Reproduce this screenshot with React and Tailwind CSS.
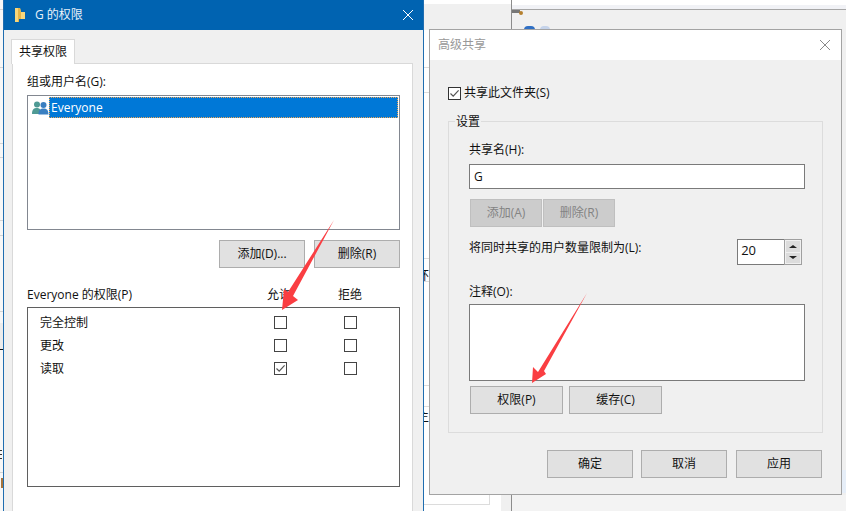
const font = "font-['Open_Sans','Noto_Sans_CJK_SC',sans-serif]"

function Button({ children, className = '', disabled = false }) {
  return (
    <div
      className={`flex h-[28px] shrink-0 items-center justify-center border ${
        disabled ? 'border-[#bfbfbf] bg-[#cccccc] text-[#838383]' : 'border-[#adadad] bg-[#e1e1e1] text-[#111]'
      } ${className}`}
    >
      {children}
    </div>
  )
}

function Check({ checked = false, dark = false }) {
  return (
    <div className={`flex h-[13px] w-[13px] items-center justify-center border ${dark ? 'border-[#333]' : 'border-[#444]'} bg-white`}>
      {checked ? (
        <svg width="11" height="11" viewBox="0 0 11 11" fill="none">
          <path d="M1.5 5.5 L4.2 8.2 L9.6 2.4" stroke="#555" strokeWidth="1.2" />
        </svg>
      ) : null}
    </div>
  )
}

function Close({ color }) {
  return (
    <svg width="12" height="12" viewBox="0 0 12 12" fill="none">
      <path d="M1 1 L11 11 M11 1 L1 11" stroke={color} strokeWidth="1" />
    </svg>
  )
}

function PermRow({ label, allowed }) {
  return (
    <div className="flex h-[23px] items-center">
      <span className="w-[246px] pl-[12px]">{label}</span>
      <Check checked={allowed} />
      <span className="w-[57px]" />
      <Check />
    </div>
  )
}

function Backdrop() {
  const leftLines = ['top-[9px]', 'top-[67px]', 'top-[143px]', 'top-[157px]', 'top-[220px]', 'top-[235px]', 'top-[311px]', 'top-[472px]']
  const midLines = ['top-[37px]', 'top-[62px]', 'top-[228px]', 'top-[251px]', 'top-[355px]', 'top-[376px]', 'top-[505px]']
  return (
    <>
      <div className="absolute left-0 top-0 h-full w-[3px] bg-[#f7f7f7]">
        {leftLines.map((t) => (
          <div key={t} className={`absolute left-0 h-px w-full bg-[#d4d4d4] ${t}`} />
        ))}
        <div className="absolute left-0 top-[323px] h-[26px] w-full bg-[#ececec]" />
        <div className="absolute left-0 top-[349px] h-px w-full bg-[#111]" />
        <div className="absolute left-0 top-[450px] h-px w-[2px] bg-[#333]" />
        <div className="absolute left-0 top-[454px] h-px w-[2px] bg-[#333]" />
        <div className="absolute left-0 top-[458px] h-px w-[2px] bg-[#333]" />
        <div className="absolute left-[1px] top-[478px] h-[10px] w-[2px] bg-[#a8743c]" />
      </div>
      <div className="absolute left-[424px] top-[30px] h-[481px] w-[5px] overflow-hidden bg-white">
        {midLines.map((t) => (
          <div key={t} className={`absolute left-0 h-px w-full bg-[#dcdcdc] ${t}`} />
        ))}
        <span className="absolute left-[-7px] top-[238px] text-[12px] leading-[16px] text-[#111]">环</span>
        <span className="absolute left-[-7px] top-[379px] text-[12px] leading-[16px] text-[#111]">主</span>
      </div>
      <div className="absolute left-[424px] top-0 h-[30px] w-[88px] border-r border-[#8c8c8c] bg-[#f0f0f0]">
        <div className="h-[4px] bg-white" />
      </div>
      <div className="absolute left-[512px] top-0 h-[30px] w-[334px] bg-[#f0f0f0]">
        <div className="h-[5px] bg-white" />
        <div className="h-[4px] bg-[#f1f2f6]" />
        <div className="h-px bg-[#a6a6a6]" />
        <div className="absolute left-0 top-[10px] h-[3px] w-[8px] bg-[#777]" />
        <div className="absolute left-[7px] top-[11px] h-[4px] w-[4px] rounded-full bg-[#b5802f]" />
        <div className="absolute left-[12px] top-[26px] h-[4px] w-[11px] rounded-t-full bg-[#2f6fc4]" />
        <div className="absolute left-[28px] top-[26px] h-[4px] w-[10px] rounded-t-full bg-[#c5d3ea]" />
      </div>
      <div className="absolute left-[424px] top-[495px] h-[10px] w-[66px] border-r border-b border-[#dcdcdc] bg-white" />
      <div className="absolute left-[490px] top-[495px] h-[16px] w-[11px] bg-white" />
      <div className="absolute left-[501px] top-[495px] h-[16px] w-[11px] border-r border-[#8c8c8c] bg-[#f0f0f0]" />
      <div className="absolute left-[512px] top-[495px] h-[16px] w-[334px] bg-[#f3f3f3]" />
      <div className="absolute left-[842px] top-[30px] h-[465px] w-[4px] bg-[#f0f0f0]">
        <div className="absolute left-0 top-[440px] h-[23px] w-full bg-[#e6eef8]" />
      </div>
    </>
  )
}

function PermissionsWindow() {
  return (
    <div className="absolute left-[3px] top-0 h-[511px] w-[421px] overflow-hidden border-x border-[#1f6db0] bg-[#f0f0f0]">
      <div className="flex h-[30px] items-center bg-[#0063b1] pl-[11px] pr-[9px] text-white">
        <svg width="11" height="14" viewBox="0 0 11 14" className="mr-[9px]">
          <path d="M0 0 H5 L6 4 H10 V11 H4 V14 H0 Z" fill="#f6d67c" />
          <path d="M3 0 H5 L6 4 V11 H4 V14 H3 Z" fill="#e3b44a" />
        </svg>
        <span className="flex-1 text-[#e8f1f9]">G 的权限</span>
        <Close color="#ffffff" />
      </div>
      <div className="pl-[8px] pr-[10px] pt-[9px]">
        <div className="relative z-10 mb-[-1px] ml-[-1px] flex h-[25px] w-[64px] items-center justify-center border border-b-0 border-[#d9d9d9] bg-white">
          共享权限
        </div>
        <div className="h-[460px] border border-[#d9d9d9] bg-white pl-[14px] pr-[12px]">
          <div className="flex h-[31px] items-center pt-[4px]">组或用户名(G):</div>
          <div className="h-[135px] border border-[#828790] p-px">
            <div className="flex h-[21px] items-center">
              <svg width="17" height="14" viewBox="0 0 17 14" className="ml-[3px] shrink-0">
                <circle cx="5" cy="3.5" r="3" fill="#4f9a94" />
                <path d="M0 13 C0 8 2 7 5 7 C8 7 9 9 9 13 Z" fill="#4f9a94" />
                <circle cx="11.5" cy="4" r="3" fill="#3a7fc1" />
                <path d="M6.5 13.5 C6.5 9 8.5 7.5 11.5 7.5 C14.5 7.5 16.5 9 16.5 13.5 Z" fill="#3a7fc1" />
              </svg>
              <div className="flex h-[21px] flex-1 items-center border border-dotted border-[#e9a55a] bg-[#0078d7] pl-[1px] text-white">
                Everyone
              </div>
            </div>
          </div>
          <div className="mt-[10px] flex justify-end gap-[9px]">
            <Button className="w-[86px]">添加(D)...</Button>
            <Button className="w-[86px]">删除(R)</Button>
          </div>
          <div className="mb-[2px] mt-[16px] flex h-[21px] items-center">
            <span className="w-[240px]">Everyone 的权限(P)</span>
            <span className="w-[71px]">允许</span>
            <span>拒绝</span>
          </div>
          <div className="h-[180px] border border-[#5f5f5f] pt-[3px]">
            <PermRow label="完全控制" />
            <PermRow label="更改" />
            <PermRow label="读取" allowed />
          </div>
        </div>
      </div>
    </div>
  )
}

function SharingWindow() {
  return (
    <div className="absolute left-[429px] top-[29px] h-[466px] w-[413px] border border-[#a3a3a3] bg-[#f0f0f0]">
      <div className="flex h-[30px] items-center justify-between bg-white pl-[8px] pr-[10px] text-[#999]">
        <span>高级共享</span>
        <Close color="#8a8a8a" />
      </div>
      <div className="px-[18px]">
        <div className="mt-[21px] flex h-[24px] items-center gap-[3px]">
          <Check checked dark />
          <span>共享此文件夹(S)</span>
        </div>
        <div className="relative mt-[16px] h-[312px] w-[375px] border border-[#dcdcdc] px-[20px] pt-[20px]">
          <span className="absolute left-[6px] top-[-8px] bg-[#f0f0f0] px-[1px] leading-[16px]">设置</span>
          <div className="flex h-[16px] items-center">共享名(H):</div>
          <div className="mt-[6px] flex h-[25px] w-[336px] items-center border border-[#7a7a7a] bg-white pl-[4px]">G</div>
          <div className="ml-px mt-[10px] flex gap-px">
            <Button disabled className="w-[72px]">添加(A)</Button>
            <Button disabled className="w-[72px]">删除(R)</Button>
          </div>
          <div className="mt-[12px] flex h-[26px] items-start">
            <span className="w-[269px] pt-px leading-[16px]">将同时共享的用户数量限制为(L):</span>
            <div className="flex h-[26px] w-[65px]">
              <span className="flex-1 border border-r-0 border-[#7a7a7a] bg-white pl-[3px] pt-[2px] text-[13px]">20</span>
              <div className="flex w-[18px] flex-col gap-px border border-[#a0a0a0] bg-[#f0f0f0] p-px">
                <div className="flex flex-1 items-center justify-center bg-[#dcdcdc]">
                  <div className="h-0 w-0 border-x-[4px] border-b-[3px] border-x-transparent border-b-[#222]" />
                </div>
                <div className="flex flex-1 items-center justify-center bg-[#dcdcdc]">
                  <div className="h-0 w-0 border-x-[4px] border-t-[3px] border-x-transparent border-t-[#222]" />
                </div>
              </div>
            </div>
          </div>
          <div className="mt-[19px] flex h-[16px] items-center">注释(O):</div>
          <div className="mt-[4px] h-[77px] w-[336px] border border-[#7a7a7a] bg-white" />
          <div className="ml-px mt-[5px] flex gap-[6px]">
            <Button className="w-[93px]">权限(P)</Button>
            <Button className="w-[93px]">缓存(C)</Button>
          </div>
        </div>
        <div className="mt-[17px] flex w-[374px] justify-end">
          <Button className="mr-[8px] w-[86px]">确定</Button>
          <Button className="mr-[9px] w-[86px]">取消</Button>
          <Button className="w-[86px]">应用</Button>
        </div>
      </div>
    </div>
  )
}

export default function App() {
  return (
    <div className={`relative h-[511px] w-[846px] overflow-hidden bg-white text-[12px] leading-[16px] text-[#111] ${font}`}>
      <Backdrop />
      <PermissionsWindow />
      <SharingWindow />
      {/* 两个红色箭头盖在窗口上 */}
      <svg className="pointer-events-none absolute left-0 top-0" width="846" height="511" viewBox="0 0 846 511">
        <polygon points="334,220 293,296 298,300 282,310 284,289 288,292" fill="#fa3e42" />
        <polygon points="587,293 544,371 546,374 532,383 533,367 538,372" fill="#fa3e42" />
      </svg>
    </div>
  )
}
